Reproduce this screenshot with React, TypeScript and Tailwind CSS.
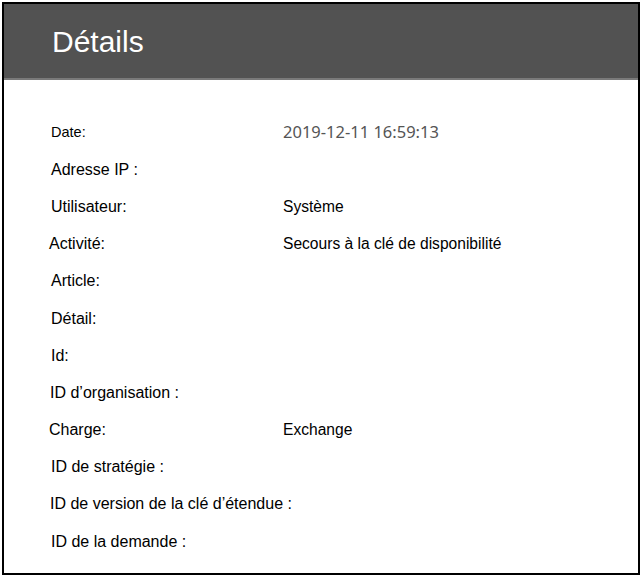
type Row = {
  label: string;
  value?: string;
  shift?: string;
  labelSize?: string;
  valueKind?: "date";
};

const rows: Row[] = [
  { label: "Date:", value: "2019-12-11 16:59:13", labelSize: "text-[14.5px]", valueKind: "date" },
  { label: "Adresse IP :" },
  { label: "Utilisateur:", value: "Système" },
  { label: "Activité:", value: "Secours à la clé de disponibilité", shift: "-ml-[2px]" },
  { label: "Article:" },
  { label: "Détail:" },
  { label: "Id:" },
  { label: "ID d’organisation :", shift: "-ml-[1px]" },
  { label: "Charge:", value: "Exchange", shift: "-ml-[2px]" },
  { label: "ID de stratégie :" },
  { label: "ID de version de la clé d’étendue :", shift: "-ml-[1px]" },
  { label: "ID de la demande :" },
];

export default function App() {
  return (
    <div className="w-[643px] h-[579px] bg-white pt-[2px] pl-[2px]">
      <div className="w-[638px] h-[573px] border-2 border-black flex flex-col font-['Liberation_Sans',Arial,sans-serif]">
        {/* header */}
        <div className="h-[76px] bg-[#525252] border-b-2 border-[#7a7a7a] flex items-center pl-[48px] pt-[2px]">
          <h1 className="text-white text-[30px] leading-none">Détails</h1>
        </div>

        {/* details list */}
        <div className="flex flex-col pt-[34px] pl-[47px]">
          {rows.map((r) => (
            <div key={r.label} className="h-[37.2px] flex items-center text-black whitespace-nowrap">
              <div className={`w-[232px] shrink-0 ${r.labelSize ?? "text-[16px]"} ${r.shift ?? ""}`}>{r.label}</div>
              {r.value &&
                (r.valueKind === "date" ? (
                  <div className="text-[16.5px] text-[#555555] font-['Noto_Sans',sans-serif]">{r.value}</div>
                ) : (
                  <div className={`text-[15.6px] ${r.shift === "-ml-[2px]" ? "ml-[2px]" : ""}`}>{r.value}</div>
                ))}
            </div>
          ))}
        </div>
      </div>
    </div>
  );
}
